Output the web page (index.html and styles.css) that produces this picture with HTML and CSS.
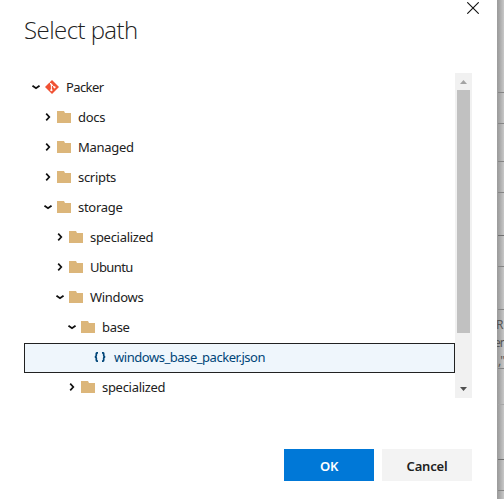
FILE: index.html
```
<!DOCTYPE html>
<html lang="en">
<head>
<meta charset="utf-8">
<title>Select path</title>
<link rel="stylesheet" href="styles.css">
</head>
<body>
<svg class="defs" aria-hidden="true">
  <symbol id="down" viewBox="0 0 8 8"><path d="M.5 2.7 4 5.3 7.5 2.7" fill="none" stroke="#111" stroke-width="1.7"/></symbol>
  <symbol id="right" viewBox="0 0 8 8"><path d="M2.2.7 5.3 4 2.2 7.3" fill="none" stroke="#111" stroke-width="1.7"/></symbol>
  <symbol id="folder" viewBox="0 0 14 12"><path d="M0 0h7l1 2h6v10H0z" fill="#dcb67a"/></symbol>
  <symbol id="git" viewBox="0 0 14 14"><path d="M7 0l7 7-7 7-7-7z" fill="#f05133" stroke-linejoin="round"/><path d="M4.5 2.5 6.4 4.4v6M6.5 4.5 9.5 7.3" fill="none" stroke="#fff" stroke-width="1"/><circle cx="6.4" cy="4.4" r="1" fill="#fff"/><circle cx="6.4" cy="10.2" r="1.1" fill="#fff"/><circle cx="9.5" cy="7.3" r="1.1" fill="#fff"/></symbol>
  <symbol id="braces" viewBox="0 0 12 10"><path d="M4 .8H3.2Q2.3.8 2.3 1.8V3.5Q2.3 4.7.8 4.8 2.3 4.9 2.3 6.1V8Q2.3 9.2 3.2 9.2H4M8 .8h.8q.9 0 .9 1v1.7q0 1.2 1.5 1.3-1.5.1-1.5 1.3V8q0 1.2-.9 1.2H8" fill="none" stroke="#004578" stroke-width="1.7"/></symbol>
</svg>
<div class="screen">
  <main class="dialog">
    <header class="header">
      <h1 class="title">Select path</h1>
      <svg class="close" viewBox="0 0 12 12"><path d="M.3.3 11.7 11.7M11.7.3.3 11.7" stroke="#111" stroke-width="1.1"/></svg>
    </header>
    <section class="browser">
      <div class="tree">
        <div class="row l0"><svg class="chev"><use href="#down"/></svg><svg class="icon git"><use href="#git"/></svg><span class="tight">Packer</span></div>
        <div class="row l1"><svg class="chev"><use href="#right"/></svg><svg class="icon"><use href="#folder"/></svg><span>docs</span></div>
        <div class="row l1"><svg class="chev"><use href="#right"/></svg><svg class="icon"><use href="#folder"/></svg><span>Managed</span></div>
        <div class="row l1"><svg class="chev"><use href="#right"/></svg><svg class="icon"><use href="#folder"/></svg><span>scripts</span></div>
        <div class="row l1"><svg class="chev"><use href="#down"/></svg><svg class="icon"><use href="#folder"/></svg><span>storage</span></div>
        <div class="row l2"><svg class="chev"><use href="#right"/></svg><svg class="icon"><use href="#folder"/></svg><span>specialized</span></div>
        <div class="row l2"><svg class="chev"><use href="#right"/></svg><svg class="icon"><use href="#folder"/></svg><span class="tight">Ubuntu</span></div>
        <div class="row l2"><svg class="chev"><use href="#down"/></svg><svg class="icon"><use href="#folder"/></svg><span>Windows</span></div>
        <div class="row l3"><svg class="chev"><use href="#down"/></svg><svg class="icon"><use href="#folder"/></svg><span>base</span></div>
        <div class="row file"><svg class="braces"><use href="#braces"/></svg><span>windows_base_packer.json</span></div>
        <div class="row l3"><svg class="chev"><use href="#right"/></svg><svg class="icon"><use href="#folder"/></svg><span>specialized</span></div>
      </div>
      <div class="scrollbar">
        <svg class="arrow" viewBox="0 0 17 17"><path d="M5 11 8.5 7 12 11z" fill="#a3a3a3"/></svg>
        <div class="thumb"></div>
        <svg class="arrow bottom" viewBox="0 0 17 17"><path d="M5 6h7L8.5 10z" fill="#505050"/></svg>
      </div>
    </section>
    <footer class="actions">
      <button class="btn primary">OK</button>
      <button class="btn">Cancel</button>
    </footer>
  </main>
  <aside class="backdrop">
    <i class="line h93"></i><i class="line h31"></i><i class="line h38"></i><i class="line h31"></i><i class="line h43 dark"></i><i class="line h31"></i><i class="line h43"></i>
    <div class="line code"><span>R</span><span class="en">en</span><span class="quote">,"</span></div>
    <i class="line h36 faint"></i><i class="line h55 dark"></i><i class="line h31"></i>
  </aside>
</div>
</body>
</html>
```
FILE: styles.css
```
* { box-sizing: border-box; }
body { margin: 0; overflow: hidden; background: #fff; color: #212121; font: 13px/30px "Noto Sans", "Open Sans", sans-serif; }
.defs { position: absolute; width: 0; height: 0; }
.screen { display: flex; width: 504px; height: 499px; }
.dialog { width: 497px; height: 499px; flex: none; padding-left: 24px; background: #fff; }
.header { display: flex; justify-content: space-between; height: 73px; padding: 2px 18px 0 0; }
.title { margin: 12px 0 0; font: 300 24px/32px "Open Sans", sans-serif; letter-spacing: -.56px; white-space: nowrap; }
.close { width: 12px; height: 12px; }
.browser { display: flex; width: 448px; height: 325px; }
.tree { width: 431px; overflow: hidden; }
.row { display: flex; align-items: center; height: 30px; white-space: nowrap; }
.row span { line-height: 28px; margin-top: -3px; letter-spacing: -.3px; }
.row .tight { letter-spacing: -.6px; }
.l0 { padding-left: 8px; }
.l1 { padding-left: 20px; }
.l2 { padding-left: 32px; }
.l3 { padding-left: 44px; }
.chev { width: 8px; height: 8px; margin: -2px 5px 0 0; flex: none; }
.icon { width: 14px; height: 12px; margin: -2px 7px 0 0; flex: none; }
.git { height: 14px; }
.file { padding-left: 69px; border: 1px solid #212121; background: #eff6fc; color: #004578; }
.braces { width: 12px; height: 10px; margin: -2px 8px 0 0; flex: none; }
.file span { letter-spacing: -.46px; }
.scrollbar { display: flex; flex-direction: column; width: 17px; height: 325px; background: #f1f1f1; }
.arrow { width: 17px; height: 17px; flex: none; }
.thumb { width: 13px; height: 243px; margin-left: 2px; background: #c1c1c1; }
.bottom { margin-top: auto; }
.actions { display: flex; gap: 8px; padding: 51px 0 0 260px; }
.btn { width: 90px; height: 32px; padding: 2px 0 0; border: 0; background: #f3f3f3; color: #212121; font: 600 13px/30px "Noto Sans", "Open Sans", sans-serif; letter-spacing: -.2px; }
.primary { background: #0078d7; color: #fff; }
.backdrop { width: 7px; height: 499px; overflow: hidden; background: linear-gradient(90deg, #9b9b9b, #a4a4a4 30%, #c8c8c8); }
.line { display: block; height: 31px; margin-left: 1px; border-bottom: 1px solid #858585; }
.h93 { height: 93px; }
.h38 { height: 38px; }
.h43 { height: 43px; }
.h36 { height: 36px; }
.h55 { height: 55px; }
.dark { border-color: #6f6f6f; }
.faint { border-color: #a7a7a7; }
.code { height: 59px; padding-top: 6px; color: #555; font-size: 12px; line-height: 18px; }
.code span { display: block; height: 18px; margin-left: -2px; }
.code .en { margin-left: -4px; letter-spacing: -1px; }
.code .quote { margin-left: 0; letter-spacing: -1px; }
```
